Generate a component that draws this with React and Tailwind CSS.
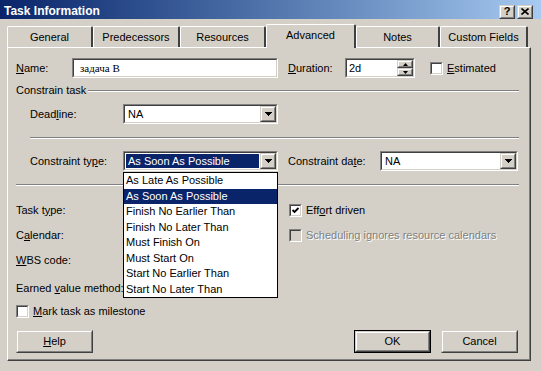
import React from 'react';

const Sunken = ({ className = '', bg = 'bg-white', children }) => (
  <div className={`border border-t-[#808080] border-l-[#808080] border-r-white border-b-white ${className}`}>
    <div className={`h-full border border-t-[#404040] border-l-[#404040] border-r-[#d4d0c8] border-b-[#d4d0c8] flex items-center ${bg}`}>
      {children}
    </div>
  </div>
);

const Raised = ({ className = '', children }) => (
  <div className={`border border-t-[#d4d0c8] border-l-[#d4d0c8] border-r-[#404040] border-b-[#404040] ${className}`}>
    <div className="h-full border border-t-white border-l-white border-r-[#808080] border-b-[#808080] bg-[#d4d0c8] flex items-center justify-center">
      {children}
    </div>
  </div>
);

const Arrow = ({ up }) => (
  <svg width="7" height="4" viewBox="0 0 7 4" shapeRendering="crispEdges">
    {up ? <path d="M3.5 0L7 4H0z" fill="#000" /> : <path d="M0 0h7L3.5 4z" fill="#000" />}
  </svg>
);

const Combo = ({ className = '', children }) => (
  <Sunken className={className}>
    <div className="flex-1 h-full flex items-center overflow-hidden">{children}</div>
    <Raised className="w-[16px] h-full">
      <Arrow />
    </Raised>
  </Sunken>
);

const Check = ({ checked, disabled }) => (
  <Sunken className="w-[13px] h-[13px] shrink-0" bg={disabled ? 'bg-[#d4d0c8]' : 'bg-white'}>
    {checked && (
      <svg width="9" height="9" viewBox="0 0 9 9" className="block">
        <path d="M1.5 4 L3.5 6 L7.5 2" stroke="#000" strokeWidth="1.8" fill="none" />
      </svg>
    )}
  </Sunken>
);

const Groove = ({ className = '' }) => (
  <div className={`h-[2px] border-t border-t-[#808080] border-b border-b-white ${className}`} />
);

const Tab = ({ label, width, active }) =>
  active ? (
    <div
      className={`${width} h-[24px] -mb-px relative z-10 bg-[#d4d0c8] border-t border-l border-white border-r-2 border-r-[#404040] rounded-t-[2px] flex items-center justify-center pb-[2px]`}
    >
      {label}
    </div>
  ) : (
    <div
      className={`${width} h-[21px] border-t border-l border-white border-r-2 border-r-[#404040] rounded-t-[2px] flex items-center justify-center pt-px`}
    >
      {label}
    </div>
  );

const Btn = ({ children, def }) =>
  def ? (
    <div className="border border-black w-[77px] h-[23px]">
      <Raised className="h-full">{children}</Raised>
    </div>
  ) : (
    <Raised className="w-[77px] h-[23px]">{children}</Raised>
  );

const options = [
  'As Late As Possible',
  'As Soon As Possible',
  'Finish No Earlier Than',
  'Finish No Later Than',
  'Must Finish On',
  'Must Start On',
  'Start No Earlier Than',
  'Start No Later Than',
];

export default function App() {
  return (
    <div className="w-[541px] h-[371px] overflow-hidden bg-[#d4d0c8] text-black text-[11px] leading-none font-['Liberation_Sans',Arial,sans-serif]">
      {/* Title bar */}
      <div className="h-[19px] bg-linear-to-r from-[#0a246a] to-[#a6caf0] flex items-center pl-[4px] pr-[8px]">
        <span className="text-white font-bold text-[12px] flex-1 pt-[2px]">Task Information</span>
        <div className="flex gap-[2px] mt-[4px]">
          <Raised className="w-[16px] h-[14px]">
            <span className="font-bold text-[11px] leading-none">?</span>
          </Raised>
          <Raised className="w-[16px] h-[14px]">
            <svg width="8" height="7" viewBox="0 0 8 7">
              <path d="M0.5 0.5L7.5 6.5M7.5 0.5L0.5 6.5" stroke="#000" strokeWidth="1.6" />
            </svg>
          </Raised>
        </div>
      </div>

      <div className="pl-[7px] pt-[5px]">
        {/* Tabs */}
        <div className="flex items-end h-[23px]">
          <Tab label="General" width="w-[86px]" />
          <Tab label="Predecessors" width="w-[87px]" />
          <Tab label="Resources" width="w-[86px]" />
          <Tab label="Advanced" width="w-[90px]" active />
          <Tab label="Notes" width="w-[84px]" />
          <Tab label="Custom Fields" width="w-[88px]" />
        </div>

        {/* Panel */}
        <div className="w-[524px] h-[314px] border-t border-l border-white border-r border-b border-r-[#404040] border-b-[#404040]">
          <div className="relative h-full border-r border-b border-r-[#808080] border-b-[#808080] pl-[8px] pr-[10px] flex flex-col">
            {/* Name row */}
            <div className="mt-[10px] h-[20px] flex items-center">
              <span className="w-[56px]">
                <span className="underline">N</span>ame:
              </span>
              <Sunken className="w-[206px] h-full">
                <span className="pl-[6px] text-[11px] font-['Liberation_Serif',serif]">задача В</span>
              </Sunken>
              <span className="ml-[10px] w-[57px]">
                <span className="underline">D</span>uration:
              </span>
              <Sunken className="w-[70px] h-full">
                <span className="flex-1 pl-[2px]">2d</span>
                <div className="w-[16px] h-full flex flex-col">
                  <Raised className="h-[8px]">
                    <svg width="5" height="3" viewBox="0 0 5 3"><path d="M2.5 0L5 3H0z" /></svg>
                  </Raised>
                  <Raised className="h-[8px]">
                    <svg width="5" height="3" viewBox="0 0 5 3"><path d="M0 0h5L2.5 3z" /></svg>
                  </Raised>
                </div>
              </Sunken>
              <div className="ml-[15px]">
                <Check />
              </div>
              <span className="ml-[4px]">
                <span className="underline">E</span>stimated
              </span>
            </div>

            {/* Constrain task */}
            <div className="mt-[6px] h-[13px] flex items-center">
              <span>Constrain task</span>
              <Groove className="flex-1 ml-[2px]" />
            </div>

            <div className="mt-[7px] h-[20px] flex items-center pl-[14px]">
              <span className="w-[93px]">
                Dead<span className="underline">l</span>ine:
              </span>
              <Combo className="w-[155px] h-full">
                <span className="pl-[3px]">NA</span>
              </Combo>
            </div>

            <Groove className="mt-[13px] ml-[14px]" />

            <div className="mt-[12px] h-[20px] flex items-center pl-[14px]">
              <span className="w-[93px]">
                Constraint ty<span className="underline">p</span>e:
              </span>
              <Combo className="w-[155px] h-full">
                <div className="h-full w-full p-px">
                  <div className="h-full bg-[#0a246a] text-white flex items-center pl-[2px]">As Soon As Possible</div>
                </div>
              </Combo>
              <span className="ml-[10px] w-[92px]">
                Constraint da<span className="underline">t</span>e:
              </span>
              <Combo className="w-[138px] h-full">
                <span className="pl-[3px]">NA</span>
              </Combo>
            </div>

            <Groove className="mt-[13px]" />

            {/* Lower fields */}
            <div className="mt-[14px] h-[20px] flex items-center">
              <span className="w-[273px]">
                Task t<span className="underline">y</span>pe:
              </span>
              <Check checked />
              <span className="ml-[4px]">
                Eff<span className="underline">o</span>rt driven
              </span>
            </div>
            <div className="mt-[5px] h-[20px] flex items-center">
              <span className="w-[273px]">
                C<span className="underline">a</span>lendar:
              </span>
              <Check disabled />
              <span className="ml-[4px] text-[#808080] [text-shadow:1px_1px_0_#fff]">
                Schedulin<span className="underline">g</span> ignores resource calendars
              </span>
            </div>
            <div className="mt-[5px] h-[20px] flex items-center">
              <span>
                <span className="underline">W</span>BS code:
              </span>
            </div>
            <div className="mt-[8px] h-[20px] flex items-center">
              <span>
                Earned <span className="underline">v</span>alue method:
              </span>
            </div>

            <div className="mt-[7px] h-[13px] flex items-center">
              <Check />
              <span className="ml-[4px]">
                <span className="underline">M</span>ark task as milestone
              </span>
            </div>

            <div className="mt-[12px] flex items-center">
              <Btn>
                <span className="underline">H</span>elp
              </Btn>
              <div className="flex-1" />
              <Btn def>OK</Btn>
              <div className="w-[10px]" />
              <Btn>Cancel</Btn>
              <div className="w-[1px]" />
            </div>

            {/* Open dropdown list */}
            <div className="absolute left-[115px] top-[124px] w-[155px] border border-black bg-white z-20">
              {options.map((o) => (
                <div
                  key={o}
                  className={`h-[15.5px] flex items-center pl-[2px] ${o === 'As Soon As Possible' ? 'bg-[#0a246a] text-white' : ''}`}
                >
                  {o}
                </div>
              ))}
            </div>
          </div>
        </div>
      </div>
    </div>
  );
}
